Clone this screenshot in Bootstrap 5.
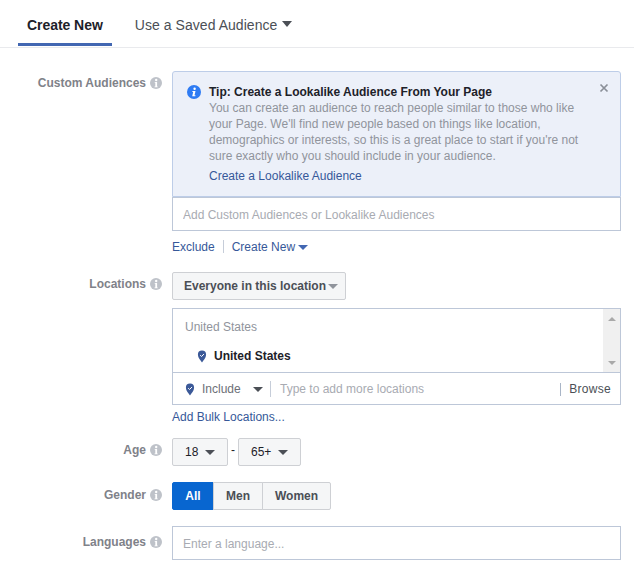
<!DOCTYPE html>
<html lang="en"><head><meta charset="utf-8"><title>Audience</title>
<link href="https://cdn.jsdelivr.net/npm/bootstrap@5.3.0/dist/css/bootstrap.min.css" rel="stylesheet">
<style>
html,body{height:100%}
body{font:12px/16px "Liberation Sans",Arial,sans-serif;color:#4b4f56;background:#fff;overflow:hidden}
a{text-decoration:none;color:#365899}
.tabbar{height:48px;border-bottom:1px solid #e9eaed;padding-left:18px;gap:14px}
.tabbar .nav-link{height:46px;padding:17px 9px 0;font-size:14px;line-height:17px;color:#4b4f56;border-bottom:3px solid transparent;letter-spacing:.05px}
.tabbar .nav-link.active{font-weight:700;color:#1d2129;border-bottom-color:#4267b2;letter-spacing:-.05px}
.tri{display:inline-block;width:0;height:0;border-style:solid;border-color:currentColor transparent transparent;border-width:5px 5px 0;vertical-align:2px}
.tri-lg{border-width:6px 5.5px 0;color:#4b4f56;margin-left:5px;vertical-align:3px}
.tri-g{color:#90949c}
.formarea{padding:23px 13px 0 0}
.rowline{display:flex}
.lab{width:172px;flex:none;padding-right:10px;text-align:right;font-weight:700;color:#7f8289;display:flex;justify-content:flex-end;align-items:center;height:24px;gap:4px;white-space:nowrap}
.lab-gen{height:26px}
.lab-tall{height:32px}
.inf{width:12px;height:12px;flex:none;display:block}
.cont{flex:1;min-width:0}
.tipbox{height:126px;border:1px solid #bdcde8;border-radius:3px 3px 0 0;background:#ecf0f9;padding:12px 14px 0 36px;position:relative;color:#90949c;margin:0}
.tipbox h6{font:700 12px/16px "Liberation Sans",Arial,sans-serif;color:#1d2129;margin:0}
.tipbox p{margin:0;width:380px}
.tipbox a{display:block;margin-top:4px}
.tipi{position:absolute;left:14px;top:13px;width:14px;height:14px}
.tipx{position:absolute;right:11px;top:11px;width:10px;height:10px}
.fb-input.form-control{border:1px solid #bdc7d8;border-radius:0;height:34px;font-size:12px;line-height:16px;padding:1px 10px 0;color:#4b4f56}
.fb-input.form-control::placeholder{color:#a8abb2;opacity:1}
.linkline{height:17px;margin-top:7px;margin-bottom:17px}
.sep{width:1px;height:13px;background:#c6cdd9;margin:0 8px}
.fb-btn.btn{--bs-btn-border-radius:2px;height:28px;padding:0 12px;font-size:12px;line-height:26px;font-weight:700;background:#f5f6f7;border:1px solid #ced0d4;color:#4b4f56;display:inline-flex;align-items:center;white-space:nowrap}
.locbtn.btn{width:174px;padding:0 7px 0 11px;justify-content:space-between}
.locbox{border:1px solid #bdc7d8;height:97px;margin-top:8px}
.loclist{height:64px;border-bottom:1px solid #bdc7d8;position:relative;padding:10px 12px}
.locgrp{color:#90949c;margin-bottom:13px}
.locitem{font-weight:700;color:#1d2129;padding-left:12px;gap:7px}
.pin{width:10px;height:13px;flex:none}
.scr{position:absolute;right:0;top:0;bottom:0;width:17px;background:#f0f0f0}
.scr i{position:absolute;left:5px;width:0;height:0;border-style:solid;border-color:transparent}
.scr .up{top:8px;border-width:0 4px 4px;border-bottom-color:#a9a9a9}
.scr .dn{bottom:7px;border-width:4px 4px 0;border-top-color:#a9a9a9}
.locadd{height:32px;padding:0 9px 0 12px}
.incl{color:#6d7077;gap:7px;width:85px}
.locadd .sep{height:16px;margin:0 9px 0 0}
.ph{color:#a8abb2}
.brw{color:#4b4f56;letter-spacing:.3px}
.locadd .sep2{height:13px;margin:0 8px 0 0;background:#a9b5c7}
.bulk{display:block;margin-top:4px;height:17px}
.agerow{margin-top:12px}
.agebtn.btn{padding:0 12px;justify-content:space-between;font-weight:400;color:#1d2129}
.dash{width:10px;text-align:center;color:#1d2129;line-height:24px}
.gen.btn{padding:0;justify-content:center;flex:none}
.gen.btn.on{background:#0866d0;border-color:#0866d0;color:#fff;width:42px}
.gen.btn.g-men{width:50px}
.gen.btn.g-women{width:69px}
.gen.btn:not(:first-child){margin-left:-1px}
.mt16{margin-top:16px}
</style></head>
<body>
<ul class="nav tabbar">
<li class="nav-item"><a class="nav-link active" href="#">Create New</a></li>
<li class="nav-item"><a class="nav-link" href="#">Use a Saved Audience<span class="tri tri-lg"></span></a></li>
</ul>
<main class="formarea">
<div class="rowline">
<div class="lab"><span>Custom Audiences</span><svg class="inf" viewBox="0 0 12 12"><circle cx="6" cy="6" r="6" fill="#bec2c9"/><circle cx="6.2" cy="3" r="1.2" fill="#fff"/><path d="M4.700 5h2.400v4.400h.6v.8H4.500v-.8h.8V5.800h-.6z" fill="#fff"/></svg></div>
<div class="cont">
<div class="tipbox alert" role="alert">
<svg class="tipi" viewBox="0 0 14 14"><circle cx="7" cy="7" r="7" fill="#2e7bf3"/><circle cx="7.600" cy="3.700" r="1.200" fill="#fff"/><path d="M5.500 6h3L7.500 10.300h1l-.2.900H5.200L6.200 6.900h-.9z" fill="#fff"/></svg>
<svg class="tipx" viewBox="0 0 10 10"><path d="M1.500 1.500l7 7M8.500 1.500l-7 7" stroke="#8a8f98" stroke-width="1.700"/></svg>
<h6>Tip: Create a Lookalike Audience From Your Page</h6>
<p>You can create an audience to reach people similar to those who like your Page. We'll find new people based on things like location, demographics or interests, so this is a great place to start if you're not sure exactly who you should include in your audience.</p>
<a href="#">Create a Lookalike Audience</a>
</div>
<input class="form-control fb-input" placeholder="Add Custom Audiences or Lookalike Audiences">
<div class="d-flex align-items-center linkline"><a href="#">Exclude</a><span class="sep"></span><a href="#">Create New <span class="tri" style="color:#4267b2;vertical-align:1px"></span></a></div>
</div></div>

<div class="rowline">
<div class="lab"><span>Locations</span><svg class="inf" viewBox="0 0 12 12"><circle cx="6" cy="6" r="6" fill="#bec2c9"/><circle cx="6.2" cy="3" r="1.2" fill="#fff"/><path d="M4.700 5h2.400v4.400h.6v.8H4.500v-.8h.8V5.800h-.6z" fill="#fff"/></svg></div>
<div class="cont">
<button class="btn fb-btn locbtn" type="button">Everyone in this location<span class="tri tri-g"></span></button>
<div class="locbox">
<div class="loclist">
<div class="locgrp">United States</div>
<div class="d-flex align-items-center locitem"><svg class="pin" viewBox="0 0 11 13"><path d="M5.500 0C8.500 0 10 1.600 10 4.500 10 8 7 10.500 5.500 13 4 10.500 1 8 1 4.500 1 1.600 2.500 0 5.500 0z" fill="#3b5998"/><path d="M3.500 5l1.500 1.500L7.700 3.700" fill="none" stroke="#fff" stroke-width="1.100"/></svg>United States</div>
<div class="scr"><i class="up"></i><i class="dn"></i></div>
</div>
<div class="d-flex align-items-center locadd">
<div class="d-flex align-items-center incl"><svg class="pin" viewBox="0 0 11 13"><path d="M5.500 0C8.500 0 10 1.600 10 4.500 10 8 7 10.500 5.500 13 4 10.500 1 8 1 4.500 1 1.600 2.500 0 5.500 0z" fill="#3b5998"/><path d="M3.500 5l1.500 1.500L7.700 3.700" fill="none" stroke="#fff" stroke-width="1.100"/></svg><span>Include</span><span class="tri" style="margin-left:5px;color:#4b4f56;vertical-align:0"></span></div>
<span class="sep"></span><span class="ph flex-grow-1">Type to add more locations</span><span class="sep sep2"></span><a class="brw" href="#">Browse</a>
</div></div>
<a class="bulk" href="#">Add Bulk Locations...</a>
</div></div>

<div class="rowline agerow">
<div class="lab"><span>Age</span><svg class="inf" viewBox="0 0 12 12"><circle cx="6" cy="6" r="6" fill="#bec2c9"/><circle cx="6.2" cy="3" r="1.2" fill="#fff"/><path d="M4.700 5h2.400v4.400h.6v.8H4.500v-.8h.8V5.800h-.6z" fill="#fff"/></svg></div>
<div class="cont d-flex">
<button class="btn fb-btn agebtn" type="button" style="width:56px">18<span class="tri" style="color:#4b4f56"></span></button><span class="dash">-</span>
<button class="btn fb-btn agebtn" type="button" style="width:63px">65+<span class="tri" style="color:#4b4f56"></span></button>
</div></div>

<div class="rowline mt16">
<div class="lab lab-gen"><span>Gender</span><svg class="inf" viewBox="0 0 12 12"><circle cx="6" cy="6" r="6" fill="#bec2c9"/><circle cx="6.2" cy="3" r="1.2" fill="#fff"/><path d="M4.700 5h2.400v4.400h.6v.8H4.500v-.8h.8V5.800h-.6z" fill="#fff"/></svg></div>
<div class="cont"><div class="btn-group" role="group">
<button class="btn fb-btn gen on" type="button">All</button><button class="btn fb-btn gen g-men" type="button">Men</button><button class="btn fb-btn gen g-women" type="button">Women</button>
</div></div></div>

<div class="rowline mt16">
<div class="lab lab-tall"><span>Languages</span><svg class="inf" viewBox="0 0 12 12"><circle cx="6" cy="6" r="6" fill="#bec2c9"/><circle cx="6.2" cy="3" r="1.2" fill="#fff"/><path d="M4.700 5h2.400v4.400h.6v.8H4.500v-.8h.8V5.800h-.6z" fill="#fff"/></svg></div>
<div class="cont"><input class="form-control fb-input" placeholder="Enter a language..."></div>
</div>
</main>
<script src="https://cdn.jsdelivr.net/npm/bootstrap@5.3.0/dist/js/bootstrap.bundle.min.js"></script>
</body></html>
